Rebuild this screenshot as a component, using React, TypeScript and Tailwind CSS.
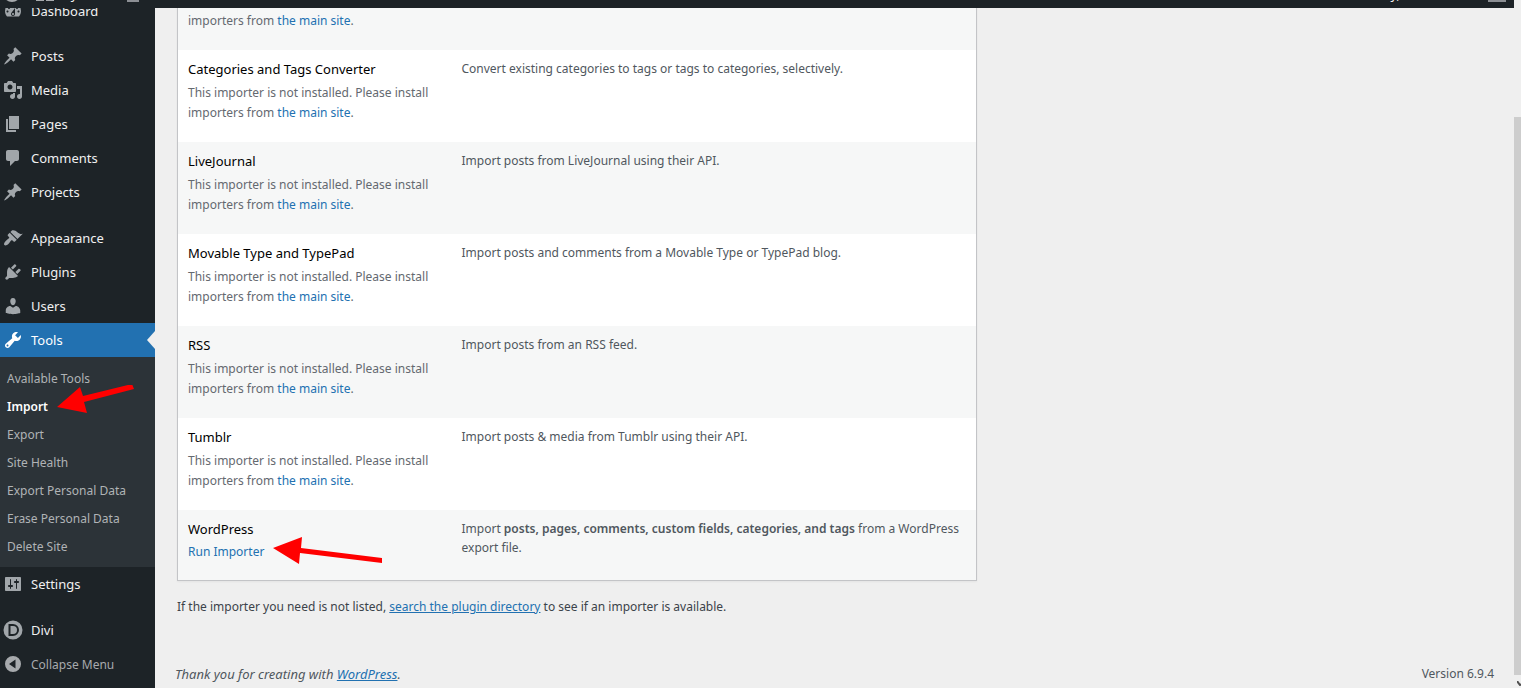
import clsx from "clsx";
import type { ReactNode } from "react";

const icons = {
  dashboard:
    "M4 15.5C2.7 14.2 2 12 2 10a8 8 0 0 1 16 0c0 2-.7 4.2-2 5.5zM10 4c.55 0 1 .45 1 1s-.45 1-1 1-1-.45-1-1 .45-1 1-1zM6 6c.55 0 1 .45 1 1s-.45 1-1 1-1-.45-1-1 .45-1 1-1zm8 0c.55 0 1 .45 1 1s-.45 1-1 1-1-.45-1-1 .45-1 1-1zm-5.37 5.55L12 7v6c0 1.1-.9 2-2 2s-2-.9-2-2c0-.57.24-1.08.63-1.45zM4.500 9.500c.55 0 1 .45 1 1s-.45 1-1 1-1-.45-1-1 .45-1 1-1zm11 0c.55 0 1 .45 1 1s-.45 1-1 1-1-.45-1-1 .45-1 1-1zM11 13c0-.55-.45-1-1-1s-1 .45-1 1 .45 1 1 1 1-.45 1-1z",
  post: "M10.44 3.02l1.82-1.82 6.36 6.35-1.83 1.82c-1.05-.68-2.48-.57-3.41.36l-.75.75c-.92.93-1.04 2.35-.35 3.41l-1.83 1.82-2.41-2.41-2.8 2.79c-.42.42-3.38 2.71-3.8 2.29s1.86-3.39 2.28-3.81l2.79-2.79L4.1 9.36l1.83-1.82c1.05.69 2.48.57 3.4-.36l.75-.75c.93-.92 1.05-2.35.36-3.41z",
  media:
    "M13 11V4c0-.55-.45-1-1-1h-1.67L9 1H5L3.67 3H2c-.55 0-1 .45-1 1v7c0 .55.45 1 1 1h10c.55 0 1-.45 1-1zM7 4.5c1.38 0 2.5 1.12 2.5 2.5S8.38 9.5 7 9.5 4.5 8.38 4.5 7 5.62 4.5 7 4.5zM14 6h5v10.5c0 1.38-1.12 2.5-2.5 2.5S14 17.88 14 16.5s1.12-2.5 2.5-2.5c.17 0 .34.02.5.05V9h-3V6zm-4 8.05V13h2v3.5c0 1.38-1.12 2.5-2.5 2.5S7 17.88 7 16.5 8.12 14 9.5 14c.17 0 .34.02.5.05z",
  page: "M6 15V2h10v13H6zm-1 1h8v2H3V5h2v11z",
  comments:
    "M5 2h9c1.1 0 2 .9 2 2v7c0 1.1-.9 2-2 2h-2l-5 5v-5H5c-1.1 0-2-.9-2-2V4c0-1.1.9-2 2-2z",
  appearance:
    "M14.48 11.06L7.41 3.99l1.5-1.5c.5-.56 2.3-.47 3.51.32 1.21.8 1.43 1.28 2.91 2.1 1.18.64 2.45 1.26 4.45.85zm-.71.71L6.7 4.7 4.93 6.47c-.39.39-.39 1.02 0 1.41l1.06 1.06c.39.39.39 1.03 0 1.42-.6.6-1.43 1.11-2.21 1.69-.35.26-.7.53-1.01.84C1.43 14.23.4 16.08 1.4 17.07c.99 1 2.84-.03 4.18-1.36.31-.31.58-.66.85-1.02.57-.78 1.08-1.61 1.69-2.21.39-.39 1.02-.39 1.41 0l1.06 1.06c.39.39 1.02.39 1.41 0z",
  plugins:
    "M13.11 4.36L9.87 7.6 8 5.73l3.24-3.24c.35-.34 1.05-.2 1.56.32.52.51.66 1.21.31 1.55zm-8 1.77l.91-1.12 9.01 9.01-1.19.84c-.71.71-2.63 1.16-3.82 1.16H6.14L4.9 17.26c-.59.59-1.54.59-2.12 0-.59-.58-.59-1.53 0-2.12l1.24-1.24v-3.88c0-1.13.4-3.19 1.09-3.89zm7.26 3.97l3.24-3.24c.34-.35 1.04-.21 1.55.31.52.51.66 1.21.31 1.55l-3.24 3.25z",
  users:
    "M10 9.25c-2.27 0-2.73-3.44-2.73-3.44C7 4.02 7.82 2 9.97 2c2.16 0 2.98 2.02 2.71 3.81 0 0-.41 3.44-2.68 3.44zm0 2.57L12.72 10c2.39 0 4.52 2.33 4.52 4.53v2.49s-3.65 1.13-7.24 1.13c-3.65 0-7.24-1.13-7.24-1.13v-2.49c0-2.25 1.94-4.48 4.47-4.48z",
  tools:
    "M16.68 9.77c-1.34 1.34-3.3 1.67-4.95.99l-5.41 6.52c-.99.99-2.59.99-3.58 0s-.99-2.59 0-3.57l6.52-5.42c-.68-1.65-.35-3.61.99-4.95 1.28-1.28 3.12-1.62 4.72-1.06l-2.89 2.89 2.82 2.82 2.86-2.87c.53 1.58.18 3.39-1.08 4.65zM3.81 16.21c.4.39 1.04.39 1.43 0 .4-.4.4-1.04 0-1.43-.39-.4-1.03-.4-1.43 0-.39.39-.39 1.03 0 1.43z",
  settings:
    "M18 16V4c0-.55-.45-1-1-1H3c-.55 0-1 .45-1 1v12c0 .55.45 1 1 1h14c.55 0 1-.45 1-1zM8 11h1c.55 0 1 .45 1 1s-.45 1-1 1H8v1.5c0 .28-.22.5-.5.5s-.5-.22-.5-.5V13H6c-.55 0-1-.45-1-1s.45-1 1-1h1V5.5c0-.28.22-.5.5-.5s.5.22.5.5V11zm5-2h-1c-.55 0-1-.45-1-1s.45-1 1-1h1V5.5c0-.28.22-.5.5-.5s.5.22.5.5V7h1c.55 0 1 .45 1 1s-.45 1-1 1h-1v5.5c0 .28-.22.5-.5.5s-.5-.22-.5-.5V9z",
  divi: "M10 .5a9.500 9.500 0 1 0 0 19 9.500 9.500 0 0 0 0-19zM5.500 4h4.500a6 6 0 0 1 0 12H5.500zM7.500 6v8h2.500a4 4 0 0 0 0-8z",
  collapse: "M10 2a8 8 0 1 0 0 16 8 8 0 0 0 0-16zM12.500 5.500v9L6 10z",
};

type IconName = keyof typeof icons;

function Icon({ name }: { name: IconName }) {
  return (
    <svg viewBox="0 0 20 20" className="size-5 shrink-0" fill="currentColor" fillRule="evenodd" aria-hidden="true">
      <path d={icons[name]} />
    </svg>
  );
}

function MenuItem({ icon, label, current }: { icon: IconName; label: string; current?: boolean }) {
  return (
    <a
      href="#"
      className={clsx(
        "flex h-[34px] items-center pl-[3px] text-[13px]",
        current ? "bg-[#2271b1] text-white" : "text-[#f0f0f1]",
      )}
    >
      <span className={clsx("flex w-7", current ? "text-white" : "text-[#a1a6aa]")}>
        <Icon name={icon} />
      </span>
      <span className="flex-1 pt-[2px]">{label}</span>
      {current && (
        <svg viewBox="0 0 8 18" className="h-[18px] w-2" fill="#efefef" aria-hidden="true">
          <path d="M8 0v18L0 9z" />
        </svg>
      )}
    </a>
  );
}

const submenu = [
  "Available Tools",
  "Import",
  "Export",
  "Site Health",
  "Export Personal Data",
  "Erase Personal Data",
  "Delete Site",
];

function Sidebar() {
  return (
    <nav className="relative -mt-[14px] w-[155px] shrink-0 bg-[#1d2327]">
      <MenuItem icon="dashboard" label="Dashboard" />
      <div className="mt-[11px]">
        <MenuItem icon="post" label="Posts" />
        <MenuItem icon="media" label="Media" />
        <MenuItem icon="page" label="Pages" />
        <MenuItem icon="comments" label="Comments" />
        <MenuItem icon="post" label="Projects" />
      </div>
      <div className="mt-3">
        <MenuItem icon="appearance" label="Appearance" />
        <MenuItem icon="plugins" label="Plugins" />
        <MenuItem icon="users" label="Users" />
        <MenuItem icon="tools" label="Tools" current />
      </div>
      <ul className="bg-[#2c3338] pt-2 pb-[6px] text-xs">
        {submenu.map((item) => (
          <li key={item}>
            <a
              href="#"
              className={clsx(
                "block pl-[7px] leading-7",
                item === "Import" ? "font-semibold text-white" : "text-[#b0b3b6]",
              )}
            >
              {item}
            </a>
          </li>
        ))}
      </ul>
      <MenuItem icon="settings" label="Settings" />
      <div className="mt-3">
        <MenuItem icon="divi" label="Divi" />
        <button type="button" className="flex h-[34px] w-full items-center pl-[3px] text-left text-xs text-[#a7aaad]">
          <span className="flex w-7">
            <Icon name="collapse" />
          </span>
          <span className="pt-[2px]">Collapse Menu</span>
        </button>
      </div>
      <svg
        viewBox="0 0 78 28"
        className="absolute top-[391px] left-14 h-7 w-[78px]"
        fill="#ff0000"
        aria-hidden="true"
      >
        <path d="M1 22 24 2l3 9L76 -1l2 5L28 17l3 11z" />
      </svg>
    </nav>
  );
}

const importers: { name: string; text: ReactNode; installed?: boolean }[] = [
  { name: "Blogger", text: "" },
  {
    name: "Categories and Tags Converter",
    text: "Convert existing categories to tags or tags to categories, selectively.",
  },
  { name: "LiveJournal", text: "Import posts from LiveJournal using their API." },
  {
    name: "Movable Type and TypePad",
    text: "Import posts and comments from a Movable Type or TypePad blog.",
  },
  { name: "RSS", text: "Import posts from an RSS feed." },
  { name: "Tumblr", text: "Import posts & media from Tumblr using their API." },
  {
    name: "WordPress",
    installed: true,
    text: (
      <>
        Import{" "}
        <strong className="font-semibold">
          posts, pages, comments, custom fields, categories, and tags
        </strong>{" "}
        from a WordPress export file.
      </>
    ),
  },
];

function ImporterTable() {
  return (
    <table className="ml-[2px] w-[800px] table-fixed border-collapse border border-[#c3c4c7] bg-white shadow-xs">
      <tbody>
        {importers.map(({ name, text, installed }) => (
          <tr key={name} className="align-top odd:bg-[#f6f7f7]">
            <td className={clsx("w-[274px] px-[10px] pt-2", installed ? "h-[71px]" : "h-[92px]")}>
              <div className="text-[13px] leading-[22px] text-black">{name}</div>
              {installed ? (
                <a href="#" className="relative mt-[2px] block leading-5 text-[#2271b1]">
                  Run Importer
                  <svg
                    viewBox="0 0 112 30"
                    className="absolute -top-[6px] left-[84px] h-[30px] w-28"
                    fill="#ff0000"
                    aria-hidden="true"
                  >
                    <path d="M1 12 30 1l-1 11 81 10v5L28 17l-1 11z" />
                  </svg>
                </a>
              ) : (
                <div className="mt-[3px] leading-5 text-[#646970]">
                  This importer is not installed. Please install importers from{" "}
                  <a href="#" className="text-[#2271b1]">
                    the main site
                  </a>
                  .
                </div>
              )}
            </td>
            <td className="px-[10px] pt-[9px] leading-[19px]">{text}</td>
          </tr>
        ))}
      </tbody>
    </table>
  );
}

function AdminBar() {
  return (
    <header className="relative z-10 flex h-2 shrink-0 items-end overflow-hidden bg-[#1d2327] text-[13px] text-[#f0f0f1]">
      <div className="flex h-[30px] flex-1 items-center pr-2 pl-[3px]">
        <span className="mr-[14px] size-[18px] rounded-full border-2 border-[#a7aaad]" />
        <svg viewBox="0 0 20 18" className="mr-1 h-[18px] w-5" fill="#a7aaad" aria-hidden="true">
          <path d="M10 0l9 8v9h-8v-5H9v5H1V8z" />
        </svg>
        <span className="pt-1">My Site</span>
        <span className="ml-6 h-[18px] w-3 bg-[#8c8f94]" />
        <span className="ml-auto pt-1">Howdy,</span>
        <span className="ml-[88px] h-[17px] w-[18px] bg-[#8c8f94]" />
      </div>
    </header>
  );
}

export default function App() {
  return (
    <div className="flex h-screen overflow-hidden bg-[#efefef] font-['Noto_Sans','Open_Sans',sans-serif] text-xs text-[#50575e]">
      <div className="flex min-w-0 flex-1 flex-col">
        <AdminBar />
        <div className="flex min-h-0 flex-1">
          <Sidebar />
          <main className="-mt-[51px] flex min-w-0 flex-1 flex-col px-5">
            <ImporterTable />
            <p className="mt-4 ml-[2px] leading-5 text-[#3c434a]">
              If the importer you need is not listed,{" "}
              <a href="#" className="text-[#2271b1] underline">
                search the plugin directory
              </a>{" "}
              to see if an importer is available.
            </p>
            <footer className="mt-auto flex justify-between pb-1 leading-5">
              <p className="text-[13px] italic">
                Thank you for creating with{" "}
                <a href="#" className="text-[#2271b1] underline">
                  WordPress
                </a>
                .
              </p>
              <p>Version 6.9.4</p>
            </footer>
          </main>
        </div>
      </div>
      <div className="flex w-[7px] shrink-0 flex-col items-end pt-[117px] pb-[2px]">
        <div className="w-full flex-1 bg-[#cdcdcd]" />
        <svg viewBox="0 0 4 5" className="mt-[6px] h-[5px] w-1" fill="none" stroke="#505050" aria-hidden="true">
          <path d="M0 0l3 4 1-1" strokeWidth="2" />
        </svg>
      </div>
    </div>
  );
}
